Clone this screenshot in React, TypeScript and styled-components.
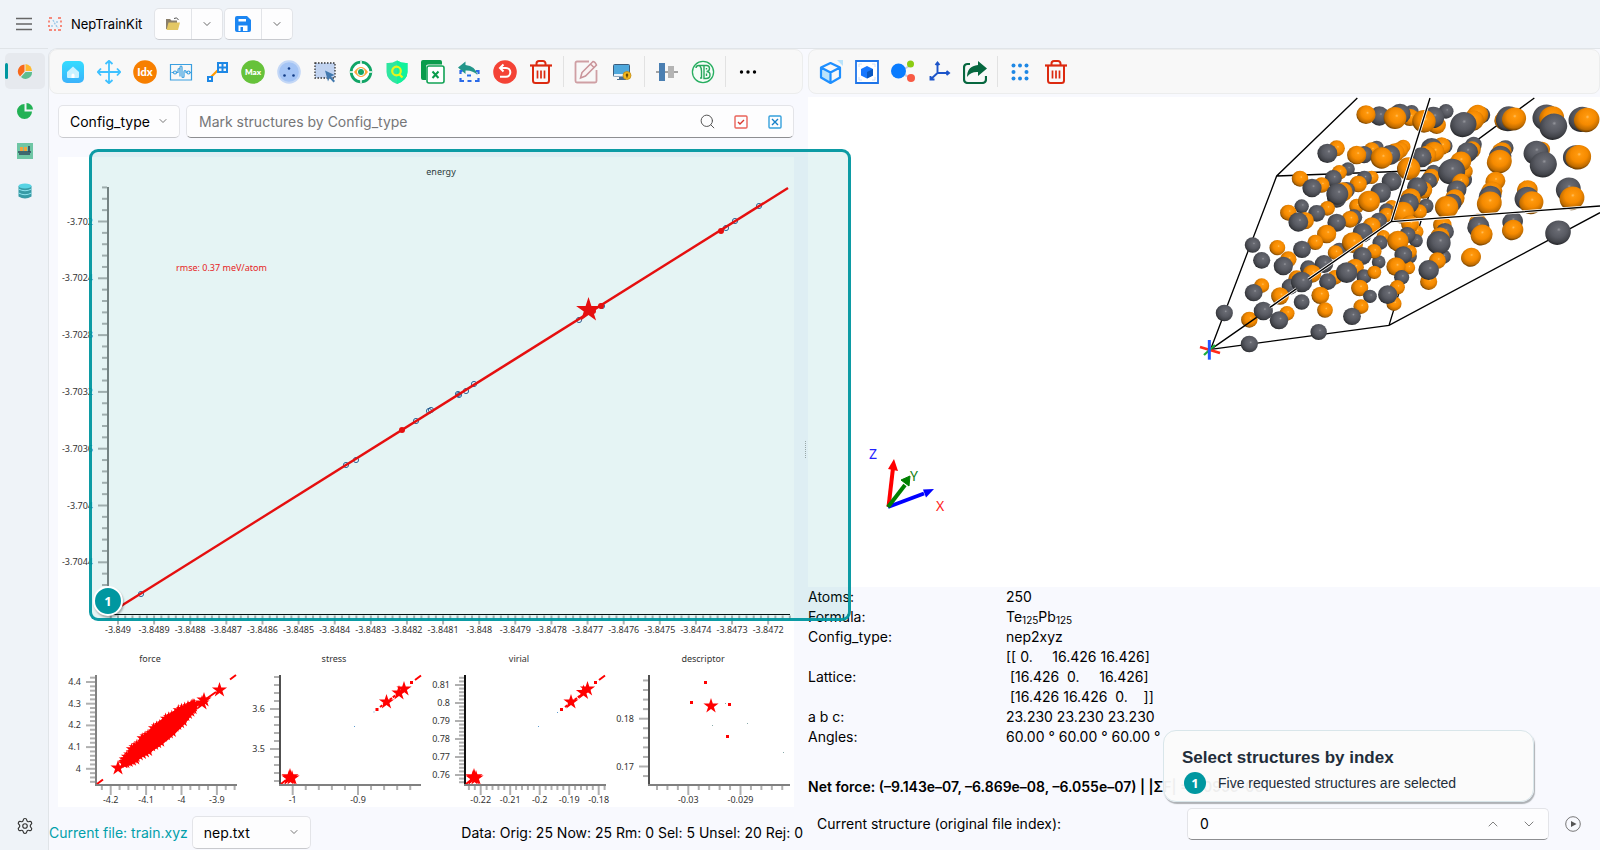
import React from 'react';
import styled, { createGlobalStyle } from 'styled-components';
import { ChevronDown, ChevronUp, Search, Settings } from 'lucide-react';

const UI_FONT = 'Inter, "Liberation Sans", sans-serif';
const TEAL = '#0097a0';

const GlobalStyle = createGlobalStyle`
  *, *::before, *::after { box-sizing: border-box; }
  body { margin: 0; background: #eff3f8; color: #000; font: 14px/20px ${UI_FONT}; }
  button, input, select { font: inherit; color: inherit; }
`;

/* ---------- window frame ---------- */

const Window = styled.div`
  min-height: 100vh;
  display: grid;
  grid-template: 48px minmax(0, 1fr) / 48px minmax(0, 1fr);
`;

const TitleBar = styled.header`
  grid-column: 1 / -1;
  display: flex;
  align-items: center;
  padding-left: 12px;
`;

const IconButton = styled.button<{ $size?: number }>`
  width: ${(p) => p.$size ?? 24}px;
  height: ${(p) => p.$size ?? 24}px;
  flex: none;
  padding: 0;
  border: 0;
  background: none;
  display: grid;
  place-items: center;
  svg { display: block; }
`;

const AppName = styled.h1`
  margin: 0 12px 0 9px;
  font-size: 13px;
  font-weight: 400;
  line-height: 20px;
`;

const Logo = styled.svg`
  margin-left: 12px;
`;

const SplitButton = styled.div`
  display: flex;
  height: 32px;
  margin-right: 1px;
  border: 1px solid #e2e4e8;
  border-bottom-color: #c8cacf;
  border-radius: 5px;
  background: #fdfdfe;
`;

const SplitPart = styled.button<{ $wide?: boolean }>`
  width: ${(p) => (p.$wide ? 36 : 31)}px;
  padding: 0;
  border: 0;
  background: none;
  display: grid;
  place-items: center;
  color: #555;
  & + & { border-left: 1px solid #e2e4e8; }
`;

const Sidebar = styled.nav`
  display: flex;
  flex-direction: column;
  gap: 4px;
  padding: 4px 3px 6px 5px;
  border-top: 1px solid #e0e4e8;
`;

const NavItem = styled.button<{ $active?: boolean }>`
  height: 36px;
  padding: 0;
  border: 0;
  border-radius: 5px;
  background: ${(p) => (p.$active ? '#e6e9ee' : 'none')};
  display: grid;
  place-items: center;
  position: relative;
  &::before {
    content: '';
    display: ${(p) => (p.$active ? 'block' : 'none')};
    position: absolute;
    left: 0;
    top: 10px;
    width: 3px;
    height: 16px;
    border-radius: 2px;
    background: ${TEAL};
  }
  &:last-child { margin-top: auto; }
`;

const Workspace = styled.main`
  position: relative;
  display: grid;
  grid-template-columns: minmax(0, 754fr) 5px minmax(0, 792fr);
  border: 1px solid #e0e4e8;
  border-width: 1px 0 0 1px;
  border-top-left-radius: 9px;
  background: #f8f9fe;
`;

const Panel = styled.section`
  display: flex;
  flex-direction: column;
  min-width: 0;
`;

const Toolbar = styled.div<{ $inset: number }>`
  display: flex;
  align-items: center;
  gap: 12px;
  height: 45px;
  padding-left: ${(p) => p.$inset}px;
  flex: none;
  border: 1px solid #eceded;
  border-radius: 8px;
  background: #f8f8f8;
`;

const Separator = styled.span`
  width: 1px;
  height: 31px;
  margin: 0 -2px;
  background: #e2e2e2;
`;

const Splitter = styled.div`
  display: grid;
  place-items: center;
  &::after {
    content: '';
    height: 17px;
    border-left: 1px dotted #aaa;
  }
`;

/* ---------- left panel ---------- */

const FilterRow = styled.div`
  display: flex;
  gap: 6px;
  padding: 11px 9px 19px;
`;

const SelectBox = styled.div<{ $width: number }>`
  position: relative;
  width: ${(p) => p.$width}px;
  height: 33px;
  flex: none;
  svg { position: absolute; right: 11px; top: 10px; pointer-events: none; }
`;

const Select = styled.select`
  appearance: none;
  width: 100%;
  height: 100%;
  padding: 0 24px 0 11px;
  border: 1px solid #e3e4e8;
  border-bottom-color: #c9cace;
  border-radius: 5px;
  background: #fdfdfe;
`;

const SearchBox = styled.div`
  flex: 1;
  min-width: 0;
  height: 33px;
  display: flex;
  align-items: center;
  gap: 10px;
  padding: 0 6px 0 12px;
  border: 1px solid #e3e4e8;
  border-bottom-color: #8d8e91;
  border-radius: 5px;
  background: #fdfdfe;
`;

const TextInput = styled.input`
  flex: 1;
  min-width: 0;
  padding: 0;
  border: 0;
  outline: 0;
  background: none;
  &::placeholder { color: #757678; opacity: 1; }
`;

const PlotArea = styled.div`
  flex: 1;
  margin: 0 9px;
  background: #fff;
  svg { display: block; width: 100%; height: 100%; }
  text { font: 9px/12px "Noto Sans", sans-serif; fill: #333; }
`;

const StatusBar = styled.footer`
  display: flex;
  align-items: center;
  gap: 4px;
  padding: 9px 0 1px;
`;

const FileName = styled.span`
  color: #009faa;
`;

const Counts = styled.span`
  margin-left: auto;
`;

/* ---------- right panel ---------- */

const Viewport = styled.div`
  flex: 1;
  margin-top: 3px;
  background: #fff;
  svg { display: block; width: 100%; height: 100%; }
  text { font: 14px "Noto Sans", sans-serif; }
`;

const InfoTable = styled.table`
  border-collapse: collapse;
  margin-bottom: 30px;
  th, td { padding: 0; font-weight: 400; text-align: left; white-space: pre; }
  th { width: 198px; }
  sub { font-size: 10px; line-height: 10px; vertical-align: -2px; }
`;

const NetForce = styled.p`
  margin: 0;
  font-weight: 600;
  white-space: nowrap;
`;

const NavigatorRow = styled.div`
  display: flex;
  align-items: center;
  gap: 12px;
  padding: 11px 15px 10px 9px;
`;

const NavigatorLabel = styled.label`
  flex: 1;
`;

const SpinBox = styled.div`
  width: 362px;
  height: 32px;
  display: flex;
  align-items: center;
  gap: 12px;
  padding: 0 7px 0 12px;
  border: 1px solid #e3e4e8;
  border-bottom-color: #8d8e91;
  border-radius: 5px;
  background: #fdfdfe;
  color: #777;
  input { color: #000; }
`;

/* ---------- tutorial overlay ---------- */

const Highlight = styled.div`
  position: absolute;
  left: 40px;
  top: 100px;
  bottom: 229px;
  width: 49.1%;
  border: 3px solid rgba(0, 151, 160, 0.95);
  border-radius: 9px;
  background: rgba(0, 151, 145, 0.1);
  pointer-events: none;
`;

const StepDot = styled.span<{ $large?: boolean }>`
  display: grid;
  place-items: center;
  flex: none;
  width: ${(p) => (p.$large ? 30 : 22)}px;
  height: ${(p) => (p.$large ? 30 : 22)}px;
  border: ${(p) => (p.$large ? '2px solid #fff' : '0')};
  border-radius: 50%;
  background: ${TEAL};
  color: #fff;
  font: bold 13px "Noto Sans", sans-serif;
  box-shadow: ${(p) => (p.$large ? '1px 2px 2px rgba(0,0,0,.3)' : 'none')};
`;

const HighlightStep = styled.div`
  position: absolute;
  left: 1px;
  bottom: 2px;
`;

const Callout = styled.aside`
  position: absolute;
  right: 66px;
  bottom: 48px;
  width: 371px;
  height: 72px;
  padding: 17px 18px 0;
  border: 1px solid #d9e6ea;
  border-radius: 13px;
  background: rgba(251, 251, 251, 0.95);
  box-shadow: 1px 2px 1px rgba(100, 105, 110, 0.5);
  color: #222d3a;
  font: 14px/20px "Liberation Sans", Arial, sans-serif;
`;

const CalloutTitle = styled.h2`
  margin: 0 0 4px;
  font-size: 17px;
  line-height: 20px;
`;

const CalloutStep = styled.div`
  display: flex;
  align-items: center;
  gap: 12px;
  padding-left: 2px;
`;

/* ---------- icons ---------- */

const icons: Record<string, React.ReactNode> = {
  Home: <><defs><linearGradient id="hm" x1="0" y1="0" x2="0" y2="1"><stop stopColor="#34dcff" /><stop offset="1" stopColor="#3bb2fb" /></linearGradient></defs><rect x="1" y="1" width="22" height="22" rx="5" fill="url(#hm)" /><path d="M6 12l6-5.500 6 5.500v5a1 1 0 0 1-1 1H7a1 1 0 0 1-1-1z" fill="#c9f2ff" /><path d="M10.500 18v-3a1.500 1.500 0 0 1 3 0v3z" fill="#fff" /></>,
  Pan: <path d="M12 1v22M1 12h22M8.500 4L12 .8 15.500 4M8.500 20l3.500 3.200 3.500-3.200M4 8.500L.8 12 4 15.500M20 8.500l3.200 3.500-3.200 3.500" fill="none" stroke="#3fc1ff" strokeWidth="1.800" />,
  'Select by index': <><circle cx="12" cy="12" r="11.800" fill="#f77f00" /><text x="12" y="15.500" textAnchor="middle" fontFamily="Lato" fontWeight="900" fontSize="11" fill="#fff">Idx</text></>,
  Range: <path d="M1.500 4.500h21v15.500h-21zM2.500 12.500h2m3 0h1.500V10q0-1.500 1-1.500t1 1.500v6.500M11 16.500V7.500q0-1.500 1-1.500t1 1.500v9q0 1 1 1t1-1v-5q0-1 1-1t1 1v1h1m3 0h1M4.500 12.500a1.500 1.500 0 1 0 3 0 1.500 1.500 0 1 0-3 0M18 12.500a1.500 1.500 0 1 0 3 0 1.500 1.500 0 1 0-3 0" fill="none" stroke="#3a9fe0" strokeWidth="1.200" />,
  Lattice: <><path d="M6 17l6.500-6.500" stroke="#f90" strokeWidth="2.200" /><path d="M3 17h4v4H3z" fill="none" stroke="#1e88e5" strokeWidth="2" /><path d="M13 3h9v9h-9zM17.500 3v9M13 7.500h9" fill="none" stroke="#1e88e5" strokeWidth="2" /></>,
  'Max error': <><circle cx="12" cy="12" r="11.800" fill="#66c23a" /><text x="12" y="15" textAnchor="middle" fontFamily="Lato" fontWeight="800" fontSize="8" fill="#fff">Max</text></>,
  Sparse: <><circle cx="12" cy="12" r="11.800" fill="#c3d7f6" /><circle cx="12" cy="12" r="9.800" fill="#a4c4f5" /><g fill="#123c86"><circle cx="12" cy="8.500" r="1.300" /><circle cx="7.500" cy="15.500" r="1.300" /><circle cx="16.500" cy="15.500" r="1.300" /></g></>,
  'Box select': <><path d="M2 3h20v15H2z" fill="#c1d3f0" stroke="#333" strokeWidth="1.300" strokeDasharray="1.500 1.500" /><path d="M12 10.500l9.500 4.500-3.500 1.500 4 4.500-1.500 1.500-4-4.500-1.500 3.500z" fill="#4279ae" /></>,
  Inspect: <><circle cx="12" cy="12" r="9.800" fill="#fff" stroke="#12a566" strokeWidth="2.800" /><path d="M12 1v6M12 17v6M1 12h5M18 12h5" stroke="#fff" strokeWidth="1.500" /><path d="M5 12q7-10 14 0-7 10-14 0" fill="#ffa63a" /><circle cx="12" cy="12" r="3.600" fill="#12a566" stroke="#fff" /></>,
  Protect: <><path d="M12 .5q5 3 10.500 2.500V12q0 8-10.500 12Q1.500 20 1.500 12V3Q7 3.500 12 .5z" fill="#2fe6a0" /><path d="M12 .5q5 3 10.500 2.500V12q0 8-10.500 12z" fill="#12f29b" /><circle cx="11.500" cy="11" r="4.300" fill="none" stroke="#e6f51c" strokeWidth="2.200" /><path d="M14.500 14.500l3 3" stroke="#e6f51c" strokeWidth="2.200" /></>,
  'Clear selection': <><path d="M2 0h17a2 2 0 0 1 2 2v2.500H7a2 2 0 0 0-2 2V20H2a2 2 0 0 1-2-2V2a2 2 0 0 1 2-2z" fill="#0a9c4c" /><rect x="6" y="6" width="17" height="17" rx="2" fill="#fff" stroke="#12a356" strokeWidth="1.600" /><path d="M11.500 11.500l6 6.500M17.500 11.500l-6 6.500" stroke="#0a9c4c" strokeWidth="2" /></>,
  Invert: <><path d="M1 7.500l7.500-6v3.500q10 1 12 10-5-5-12-4.500V14z" fill="#23968a" /><path d="M3.500 14v-3h2M19 11h2.500v3M21.500 18v3H18M7 21H3.500v-3M10.500 21h4M10 15.500h4" fill="none" stroke="#2b6be8" strokeWidth="2.200" /></>,
  Undo: <><circle cx="12" cy="12" r="11.800" fill="#f44336" /><path d="M10.500 4.500L7 8l3.500 3.500M7.500 8H13a4.300 4.300 0 0 1 0 8.700H7" fill="none" stroke="#fff" strokeWidth="2" /></>,
  Delete: <><path d="M1 5.500h22" stroke="#dc2a10" strokeWidth="2.200" /><path d="M7.500 5V3.500A2.500 2.500 0 0 1 10 1h4a2.500 2.500 0 0 1 2.500 2.500V5M4 6v14.500A2.500 2.500 0 0 0 6.500 23h11a2.500 2.500 0 0 0 2.500-2.500V6" fill="none" stroke="#dc2a10" strokeWidth="2" /><path d="M8.500 10.500v8M12 10.500v8M15.500 10.500v8" stroke="#dc2a10" strokeWidth="1.700" /></>,
  Edit: <><path d="M15 1.500H3A1.500 1.500 0 0 0 1.500 3v18A1.500 1.500 0 0 0 3 22.500h18a1.500 1.500 0 0 0 1.500-1.500V10" fill="none" stroke="#cf9fa4" strokeWidth="1.800" /><path d="M8 12.500l11-11q2 0 3.500 3.500l-11 11-5 2zM16.500 4l3.500 3.500" fill="#faf3f3" stroke="#c9949a" strokeWidth="1.500" /></>,
  Display: <><rect x="3.500" y="4.500" width="16" height="12" rx="1" fill="#4fa8dc" stroke="#3b5c7c" /><path d="M4 14h15v2.500H4z" fill="#e9f2fa" /><path d="M9 17h5v2h2v1H7v-1h2z" fill="#4a6f92" /><circle cx="17" cy="15.500" r="4" fill="#f5b81d" stroke="#b78210" strokeWidth=".7" /><path d="M17 13.500v4M15.800 15h2.400" stroke="#604000" strokeWidth="1.300" /></>,
  Align: <><path d="M1 12h22" stroke="#888" strokeWidth="1.500" /><rect x="4" y="3" width="6" height="18" fill="#4a7fb2" /><rect x="13" y="6" width="6" height="12" fill="#b4b4b4" /></>,
  'Energy baseline': <><circle cx="12" cy="12" r="10.600" fill="#f5fdf8" stroke="#27ae60" strokeWidth="1.300" /><path d="M5 8q0-2.500 3-2.500h6M8.500 5.500q2 2 2 5.500v7H9M13 5.500v13h2q4 0 4-3.500t-3.500-3.500q3 0 3-3t-3-3H11M15.500 8v1.500M15.500 13.500v2.500" fill="none" stroke="#27a65c" strokeWidth="1.400" /></>,
  More: <><circle cx="5.500" cy="12" r="1.700" /><circle cx="12" cy="12" r="1.700" /><circle cx="18.500" cy="12" r="1.700" /></>,
  Perspective: <><path d="M2 8l10 5v10L2 18z" fill="#b9e3fb" /><path d="M2 7.500L11.500 3 21 7.500v10L11.500 23 2 17.500zM2 7.500l9.500 5L21 7.500M11.500 12.500V23" fill="none" stroke="#1e8fff" strokeWidth="2.200" strokeLinejoin="round" /><path d="M18 0h6v6z" fill="#b9e3fb" /></>,
  'Fit view': <><path d="M1 1h22v22H1z" fill="#fff" stroke="#1e74e8" strokeWidth="1.800" /><path d="M12 6l6 3v6.500l-6 3-6-3V9z" fill="#1677ff" /><path d="M12 12l6-3v6.500l-6 3z" fill="#0a58c0" /><path d="M4 7V4h3M17 4h3v3M20 17v3h-3M7 20H4v-3" fill="none" stroke="#cfe0fa" /></>,
  Bonds: <><path d="M8 12l12-7M8 12l12 6" stroke="#ccd" strokeWidth="2" /><circle cx="7.500" cy="11" r="7.500" fill="#0a7cff" /><circle cx="19.500" cy="4" r="3.500" fill="#8ccc12" /><circle cx="20" cy="18" r="4" fill="#f85a44" /></>,
  Axes: <path d="M10.500 13V3M8.500 5l2-2.500 2 2.500M10.500 13H22M19.500 11l2.500 2-2.500 2M10.500 13l-7 6.500M3.500 16v3.500H7.500" fill="none" stroke="#1d55c9" strokeWidth="1.900" />,
  Export: <><path d="M7 4H4.500Q1 4 1 8v11q0 4 4 4h14q4 0 4-4v-3" fill="none" stroke="#06673f" strokeWidth="2.200" /><path d="M15 1l9 7.500-9 7.500v-4q-7-.5-11 5 0-11 11-12z" fill="#06673f" /></>,
  Supercell: <g fill="#1e88e5">{[5.5, 12, 18.5].flatMap((x) => [5.5, 12, 18.5].map((y) => (x === 12 && y === 12 ? null : <circle key={`${x}${y}`} cx={x} cy={y} r="2" />)))}</g>,
};

const Glyph = ({ name }: { name: string }) => (
  <svg width="24" height="24" viewBox="0 0 24 24">{icons[name]}</svg>
);

const ToolGroup = ({ names }: { names: string[] }) => (
  <>{names.map((n) => <IconButton key={n} aria-label={n}><Glyph name={n} /></IconButton>)}</>
);

/* ---------- charts ---------- */

const star = (cx: number, cy: number, r: number) =>
  Array.from({ length: 10 }, (_, i) => {
    const k = i % 2 ? r * 0.38 : r;
    const a = (Math.PI / 5) * i - Math.PI / 2;
    return `${(cx + k * Math.cos(a)).toFixed(1)},${(cy + k * Math.sin(a)).toFixed(1)}`;
  }).join(' ');

const Star = ({ x, y, r = 8 }: { x: number; y: number; r?: number }) => <polygon points={star(x, y, r)} fill="red" />;

interface AxisSpec {
  first: number;
  step: number;
  minor: number;
  labels: string[];
}

interface ChartProps {
  title: string;
  titleX: number;
  titleY: number;
  box: [number, number, number, number];
  x: AxisSpec;
  y: AxisSpec;
  leftColor?: string;
  bottomColor?: string;
  children: React.ReactNode;
}

const ticks = (a: AxisSpec, min: number, max: number) => {
  const out: { at: number; label?: string }[] = [];
  const d = a.step / a.minor;
  for (let i = -20; i < 200; i++) {
    const at = a.first + d * i;
    if (at < min || at > max) continue;
    out.push({ at, label: i % a.minor === 0 ? a.labels[i / a.minor] : undefined });
  }
  return out;
};

const Chart = ({ title, titleX, titleY, box, x, y, leftColor = '#808080', bottomColor = '#808080', children }: ChartProps) => {
  const [l, t, r, b] = box;
  return (
    <g>
      <text x={titleX} y={titleY} textAnchor="middle">{title}</text>
      {ticks(y, t, b).map(({ at, label }) => (
        <g key={at}>
          <path d={`M${l - 1} ${at}h${label ? -9 : -5}`} stroke="#b0b0b0" strokeWidth="2" />
          {label && <text x={l - 15} y={at + 3} textAnchor="end">{label}</text>}
        </g>
      ))}
      {ticks(x, l, r).map(({ at, label }) => (
        <g key={at}>
          <path d={`M${at} ${b + 1}v${label ? 9 : 4}`} stroke="#b0b0b0" strokeWidth="2" />
          {label && <text x={at} y={b + 18} textAnchor="middle">{label}</text>}
        </g>
      ))}
      <path d={`M${l} ${t}V${b}`} stroke={leftColor} strokeWidth="2" />
      {children}
      <path d={`M${l - 1} ${b}H${r}`} stroke={bottomColor} strokeWidth={bottomColor === '#000' ? 1 : 2} />
    </g>
  );
};

const energyPoints = [[141, 594], [346, 465], [356, 460], [416, 421], [429, 411], [431, 410], [458, 394], [459, 395], [466, 391], [474, 384], [579, 320], [602, 306], [726, 228], [735, 221], [759, 206]];
const energySelected = [[402, 430], [593, 311], [601, 306], [721, 231]];

const forceStars = Array.from({ length: 140 }, (_, i) => {
  const u = -1 + (2 * i) / 139;
  const w = ((i * 37) % 23) / 11.5 - 1;
  const along = u * 46;
  const across = w * 8 * Math.sqrt(1 - u * u);
  return [159 + along * 0.77 + across * 0.64, 734 - along * 0.64 + across * 0.77];
});

const axis = (first: number, step: number, minor: number, labels: string[]): AxisSpec => ({ first, step, minor, labels });

const energyX = ['-3.849', ...Array.from({ length: 18 }, (_, i) => String(-(38489 - i) / 10000))];

const Dots = ({ at, color = 'red', size = 3 }: { at: number[][]; color?: string; size?: number }) => (
  <>{at.map(([x, y]) => <rect key={`${x},${y}`} x={x - size / 2} y={y - size / 2} width={size} height={size} fill={color} />)}</>
);

const Plots = () => (
  <svg viewBox="58 157 736 650" role="img" aria-label="Parity plots">
    <Chart title="energy" titleX={441} titleY={175} box={[108, 187, 790, 614.5]} bottomColor="#000"
      x={axis(118, 36.12, 5, energyX)}
      y={axis(221.5, 56.8, 5, ['-3.702', '-3.7024', '-3.7028', '-3.7032', '-3.7036', '-3.704', '-3.7044'])}>
      {energyPoints.map(([x, y]) => <circle key={`${x},${y}`} cx={x} cy={y} r="2.600" fill="none" stroke="#1f4e8c" strokeWidth=".9" />)}
      <path d="M109 613.500L788 188" stroke="red" strokeWidth="2.400" />
      {energySelected.map(([x, y]) => <circle key={`${x},${y}`} cx={x} cy={y} r="3" fill="red" />)}
      <Star x={588.5} y={310} r={13} />
      <text x="176" y="271" style={{ fill: '#ff1010' }}>rmse: 0.37 meV/atom</text>
    </Chart>
    <Chart title="force" titleX={150} titleY={662} box={[96, 675, 237, 785]}
      x={axis(110.7, 35.4, 4, ['-4.2', '-4.1', '-4', '-3.9'])}
      y={axis(682, 21.7, 5, ['4.4', '4.3', '4.2', '4.1', '4'])}>
      <path d="M97 784l6-4.500M230 679.500l6-4.500M196 706l20-14" stroke="red" strokeWidth="2" />
      <ellipse cx="163" cy="731" rx="40" ry="10" fill="red" transform="rotate(-40 163 731)" />
      {forceStars.map(([x, y], i) => <Star key={i} x={x} y={y} r={6} />)}
      <Star x={118} y={768} /><Star x={202} y={703} /><Star x={204} y={700} /><Star x={219.5} y={690} />
    </Chart>
    <Chart title="stress" titleX={334} titleY={662} box={[280, 675, 421, 785]} leftColor="#505050"
      x={axis(292.7, 65.3, 5, ['-1', '-0.9'])}
      y={axis(709, 40, 5, ['3.6', '3.5'])}>
      <path d="M281 784l5-4M415 680l6-4.500" stroke="red" strokeWidth="2" />
      <path d="M380 707l24-18" stroke="red" strokeWidth="2" strokeDasharray="3 1" />
      <Star x={386.5} y={702} /><Star x={399} y={693} /><Star x={404} y={689} />
      <Star x={289} y={778} /><Star x={290} y={777} r={9} /><Star x={292} y={778} />
      <Dots at={[[377, 709.5], [411.5, 682.5]]} /><Dots at={[[354.5, 726.5], [374, 712]]} color="#5b9bd0" size={1} />
    </Chart>
    <Chart title="virial" titleX={519} titleY={662} box={[465, 675, 606, 785]} leftColor="#111"
      x={axis(480.7, 29.5, 5, ['-0.22', '-0.21', '-0.2', '-0.19', '-0.18'])}
      y={axis(685, 18, 5, ['0.81', '0.8', '0.79', '0.78', '0.77', '0.76'])}>
      <path d="M466 784l5-4M599 680l6-4.500" stroke="red" strokeWidth="2" />
      <path d="M565 707l24-18" stroke="red" strokeWidth="2" strokeDasharray="3 1" />
      <Star x={571} y={702} /><Star x={583.5} y={692.5} /><Star x={587.5} y={689} />
      <Star x={473} y={778} /><Star x={474} y={777} r={9} /><Star x={476} y={778} />
      <Dots at={[[561.5, 709.5], [595.5, 682.5]]} /><Dots at={[[538.5, 726.5], [557.5, 712.5]]} color="#5b9bd0" size={1} />
    </Chart>
    <Chart title="descriptor" titleX={703} titleY={662} box={[649, 675, 790, 785]} leftColor="#505050"
      x={axis(688.3, 52.2, 5, ['-0.03', '-0.029'])}
      y={axis(718.7, 47.8, 5, ['0.18', '0.17'])}>
      <Star x={711} y={706} />
      <Dots at={[[705.5, 682.5], [691.5, 702.5], [729.5, 704.5], [727.5, 736.5]]} />
      <Dots at={[[725.5, 703.5], [712.5, 725.5], [747.5, 723.5], [783.5, 752.5]]} color="#8aa" size={1} />
    </Chart>
  </svg>
);

/* ---------- structure view: atoms listed far to near as [x, y, radius, element] ---------- */

type Atom = [number, number, number, 'p' | 't'];

const atoms: Atom[] = [
  [474, 237, 20, 'p'], [335, 349, 21, 'p'], [545, 262, 20, 't'], [560, 172, 20, 'p'], [640, 170, 21, 't'], [665, 66, 21, 'p'], [660, 82, 26, 't'], [768, 64, 22, 'p'], [765, 168, 22, 'p'], [730, 245, 21, 'p'], [740, 105, 27, 't'],
  [708, 348, 22, 'p'], [605, 350, 20, 't'], [590, 362, 22, 'p'], [688, 365, 22, 't'], [680, 425, 20, 't'], [678, 452, 20, 'p'], [580, 440, 20, 't'], [660, 500, 20, 'p'], [655, 533, 20, 't'], [566, 516, 20, 'p'], [448, 480, 22, 'p'], [355, 535, 24, 'p'], [435, 562, 22, 't'], [320, 565, 24, 't'], [300, 590, 24, 'p'], [660, 485, 20, 't'], [822, 270, 23, 'p'], [825, 245, 22, 't'], [760, 500, 22, 'p'],
  [448, 247, 22, 't'], [430, 265, 25, 'p'], [330, 266, 24, 't'], [395, 285, 23, 't'], [366, 294, 28, 'p'], [440, 175, 24, 't'], [412, 190, 29, 'p'],
  [523, 264, 22, 'p'], [505, 282, 25, 't'], [470, 300, 24, 'p'], [458, 306, 29, 't'], [440, 325, 28, 'p'], [442, 312, 32, 'p'],
  [545, 180, 23, 't'], [522, 194, 26, 'p'], [500, 195, 28, 't'], [630, 180, 24, 't'], [615, 188, 28, 't'], [600, 195, 30, 'p'], [575, 204, 32, 't'],
  [568, 78, 29, 'p'], [528, 74, 28, 't'], [630, 72, 31, 'p'], [615, 84, 33, 't'],
  [730, 82, 32, 'p'], [702, 94, 34, 't'], [755, 168, 26, 't'], [725, 175, 31, 'p'], [732, 185, 30, 't'], [710, 195, 28, 't'], [694, 202, 30, 'p'],
  [875, 76, 24, 'p'], [862, 76, 31, 't'], [850, 92, 30, 't'], [820, 104, 37, 'p'],
  [605, 274, 29, 'p'], [656, 236, 34, 't'],
  [412, 355, 22, 't'], [380, 370, 25, 'p'], [295, 368, 24, 't'], [345, 392, 26, 't'], [325, 396, 29, 'p'],
  [500, 348, 22, 't'], [492, 382, 24, 'p'], [480, 388, 25, 't'], [440, 398, 27, 'p'], [410, 432, 28, 't'], [376, 457, 23, 't'], [336, 478, 26, 'p'],
  [572, 308, 30, 'p'], [537, 334, 32, 't'], [590, 375, 22, 't'], [566, 392, 24, 'p'], [545, 408, 26, 't'], [518, 428, 29, 'p'], [488, 458, 31, 't'],
  [720, 270, 24, 'p'], [724, 260, 24, 't'], [716, 272, 24, 'p'], [700, 300, 26, 't'], [682, 292, 30, 'p'], [662, 325, 30, 't'], [656, 340, 30, 'p'], [638, 368, 33, 't'],
  [850, 165, 24, 'p'], [845, 180, 26, 't'], [832, 187, 30, 'p'], [812, 215, 30, 't'], [785, 245, 38, 'p'],
  [812, 275, 24, 't'], [800, 300, 28, 'p'], [794, 326, 28, 't'], [785, 340, 28, 'p'], [770, 352, 34, 't'],
  [955, 82, 33, 'p'], [945, 90, 30, 't'], [955, 88, 35, 'p'], [972, 87, 34, 't'], [1068, 82, 38, 'p'], [1085, 84, 35, 't'], [1090, 110, 39, 'p'], [1175, 88, 37, 'p'], [1190, 90, 36, 't'],
  [945, 175, 24, 'p'], [935, 185, 28, 't'], [930, 200, 32, 'p'], [928, 215, 35, 't'], [1055, 180, 24, 't'], [1038, 188, 35, 'p'], [1060, 224, 38, 'p'], [1155, 200, 34, 'p'], [1165, 202, 36, 't'],
  [916, 274, 28, 't'], [905, 305, 30, 't'], [900, 320, 32, 'p'], [898, 340, 35, 't'], [1012, 300, 29, 't'], [1010, 325, 34, 'p'], [1024, 338, 34, 't'], [1135, 298, 35, 'p'], [1146, 325, 35, 't'],
  [863, 395, 24, 't'], [865, 410, 31, 'p'], [875, 435, 31, 't'], [968, 395, 29, 'p'], [968, 420, 30, 't'], [1104, 428, 36, 'p'], [843, 502, 28, 't'],
  [660, 402, 26, 't'], [652, 435, 24, 'p'], [624, 453, 31, 't'], [570, 458, 22, 'p'], [552, 484, 22, 't'], [517, 498, 27, 'p'], [495, 532, 26, 't'], [522, 560, 22, 'p'], [470, 548, 31, 'p'], [553, 547, 20, 't'],
  [436, 488, 22, 't'], [402, 522, 27, 'p'], [366, 551, 27, 't'], [335, 576, 31, 'p'], [413, 575, 25, 'p'],
  [640, 495, 26, 'p'], [618, 530, 28, 't'], [635, 562, 22, 'p'], [622, 592, 22, 't'], [612, 641, 22, 't'], [593, 614, 28, 'p'],
  [757, 405, 27, 't'], [765, 425, 26, 'p'], [750, 440, 28, 't'], [746, 458, 35, 'p'], [742, 512, 25, 't'], [716, 575, 25, 't'], [716, 540, 30, 'p'],
  [262, 473, 23, 't'], [295, 508, 24, 't'], [280, 528, 28, 'p'], [188, 465, 23, 'p'], [215, 511, 25, 'p'], [215, 587, 22, 't'], [191, 608, 26, 'p'],
  [270, 618, 26, 't'], [335, 636, 23, 'p'], [391, 616, 26, 't'], [405, 660, 23, 't'], [509, 594, 25, 't'], [540, 619, 20, 'p'], [513, 650, 22, 't'], [486, 679, 26, 'p'],
  [103, 669, 25, 'p'], [178, 689, 24, 't'], [291, 670, 22, 't'], [267, 691, 27, 'p'], [220, 663, 28, 'p'], [178, 762, 25, 'p'], [386, 726, 24, 'p'],
];

const StructureScene = () => (
  <svg viewBox="808 97 792 489" preserveAspectRatio="xMaxYMin meet" role="img" aria-label="Crystal structure">
    <defs>
      <radialGradient id="p" cx=".58" cy=".4" r=".65"><stop stopColor="#96979d" /><stop offset=".12" stopColor="#686a72" /><stop offset=".5" stopColor="#585a62" /><stop offset=".8" stopColor="#414349" /><stop offset="1" stopColor="#1e1f22" /></radialGradient>
      <radialGradient id="t" cx=".58" cy=".4" r=".65"><stop stopColor="#ffc060" /><stop offset=".12" stopColor="#ff980c" /><stop offset=".5" stopColor="#f58a00" /><stop offset=".8" stopColor="#c06c00" /><stop offset="1" stopColor="#553000" /></radialGradient>
    </defs>
    <g transform="translate(1190 90) scale(.33333)" fill="none" stroke="#000" strokeWidth="4">
      <path d="M62 778L260 258 502 24M260 258L740 240M1033 24L740 240 597 706M62 778L597 706 1230 368" />
      <g stroke="none">
        {atoms.map(([x, y, r, el], i) => (
          <ellipse key={i} cx={x} cy={y} rx={r * (x > 780 ? 1.08 : 1.03)} ry={r} fill={`url(#${el})`} transform={x > 780 ? `rotate(-25 ${x} ${y})` : undefined} />
        ))}
      </g>
      <path d="M240 652L320 596M355 568L604 395 720 24M604 395L1230 348" stroke="#fff" strokeWidth="9" />
      <path d="M62 778L200 682M240 652L320 596M355 568L604 395 720 24M604 395L1230 348" />
      <path d="M30 771l60 18" stroke="#ff2a1a" strokeWidth="8" /><path d="M42 795l33-30" stroke="#1cae3c" strokeWidth="7" /><path d="M58 750v59" stroke="#2357ff" strokeWidth="9" />
    </g>
    <path d="M888.500 507L893 468" stroke="red" strokeWidth="4" /><path d="M894 459l-6 10 10 2z" fill="red" />
    <path d="M888 507l36-13.500" stroke="#00f" strokeWidth="4" /><path d="M934 489l-11 .500 3 8z" fill="#00f" />
    <path d="M888 507l17-22" stroke="green" strokeWidth="4" /><path d="M910 476l-9 4 8 6z" fill="green" stroke="green" />
    <text x="869" y="459" fill="#2222ff">Z</text>
    <text x="910" y="481" fill="#118011">Y</text>
    <text x="936" y="511" fill="#ff2222">X</text>
  </svg>
);

const lattice = '[[ 0.     16.426 16.426]\n [16.426  0.     16.426]\n [16.426 16.426  0.    ]]';

export default function App() {
  return (
    <Window>
      <GlobalStyle />
      <TitleBar>
        <IconButton aria-label="Menu"><svg width="18" height="14"><path d="M1 1.500h16M1 7h16M1 12.500h16" stroke="#666" strokeWidth="1.600" /></svg></IconButton>
        <Logo width="14" height="14" viewBox="0 0 14 14"><path d="M1 1h3M10 1h3M1 13h3M10 13h3M0 4.500h2M12 4.500h2M0 9h2M12 9h2M6 13h2" stroke="#f58a7c" strokeWidth="2" /><path d="M5 3l2 4 3 4M9 4v2M4 8v2" fill="none" stroke="#9cc9e8" strokeWidth="1.400" strokeDasharray="2 1" /></Logo>
        <AppName>NepTrainKit</AppName>
        <SplitButton>
          <SplitPart $wide aria-label="Open"><svg width="16" height="16" viewBox="0 0 16 16"><path d="M1 3h4l1.500 1.500H12V13H1z" fill="#8a7f6a" /><path d="M3.500 6.500H15L13 14H1.500z" fill="#e3c763" /><path d="M9 2.500q3-2 4.500 1.500" fill="none" stroke="#555" /></svg></SplitPart>
          <SplitPart aria-label="Open options"><ChevronDown size={12} strokeWidth={1.8} /></SplitPart>
        </SplitButton>
        <SplitButton>
          <SplitPart $wide aria-label="Save"><svg width="16" height="16" viewBox="0 0 16 16"><path d="M2 0h10l4 4v10a2 2 0 0 1-2 2H2a2 2 0 0 1-2-2V2a2 2 0 0 1 2-2z" fill="#1c86f2" /><path d="M3.500 3h7.500v2.500H3.500zM3.500 9.500h9V15h-9z" fill="#fff" /><path d="M5.500 11h2.500v4H5.500z" fill="#1c86f2" /></svg></SplitPart>
          <SplitPart aria-label="Save options"><ChevronDown size={12} strokeWidth={1.8} /></SplitPart>
        </SplitButton>
      </TitleBar>

      <Sidebar aria-label="Pages">
        <NavItem $active aria-label="Show NEP"><svg width="16" height="16" viewBox="0 0 16 16"><path d="M7.500 1.500v7L3 13.500A7 7 0 0 1 7.500 1.500z" fill="#f8681a" /><path d="M8.500 1a7 7 0 0 1 6.500 7H8.500z" fill="#ffb92e" /><path d="M8.500 9H15a6.500 6.500 0 0 1-11 5z" fill="#5dbd90" /></svg></NavItem>
        <NavItem aria-label="Dataset"><svg width="16" height="16" viewBox="0 0 16 16"><path d="M7.500 1v7.500H15A7.500 7.500 0 1 1 7.500 1z" fill="#22b155" /><path d="M9.500 0A6.500 6.500 0 0 1 16 6.500H9.500z" fill="#22b155" /></svg></NavItem>
        <NavItem aria-label="Make data"><svg width="16" height="16" viewBox="0 0 16 16"><path d="M0 0h16v16H0z" fill="#6fc6a5" /><path d="M3 4h3v4H3zM7 4h3v4H7z" fill="#f2a33c" /><path d="M1 9h13M12 3v6M2 11h11" stroke="#2f4a5c" strokeWidth="1.600" /></svg></NavItem>
        <NavItem aria-label="Data management"><svg width="16" height="16" viewBox="0 0 16 16"><path d="M1.500 3h13v10.500q-6.500 4-13 0z" fill="#379ba6" /><path d="M1.500 6q6.500 3.500 13 0M1.500 10q6.500 3.500 13 0" fill="none" stroke="#8fe3ee" /><ellipse cx="8" cy="3" rx="6.500" ry="2.600" fill="#58d3e4" /></svg></NavItem>
        <NavItem aria-label="Settings"><Settings size={18} strokeWidth={1.5} color="#333" /></NavItem>
      </Sidebar>

      <Workspace>
        <Panel>
          <Toolbar $inset={11}>
            <ToolGroup names={['Home', 'Pan', 'Select by index', 'Range', 'Lattice', 'Max error', 'Sparse', 'Box select', 'Inspect', 'Protect', 'Clear selection', 'Invert', 'Undo', 'Delete']} />
            <Separator />
            <ToolGroup names={['Edit', 'Display']} />
            <Separator />
            <ToolGroup names={['Align', 'Energy baseline']} />
            <Separator />
            <ToolGroup names={['More']} />
          </Toolbar>
          <FilterRow>
            <SelectBox $width={122}>
              <Select aria-label="Search field"><option>Config_type</option></Select>
              <ChevronDown size={12} strokeWidth={1.8} color="#666" />
            </SelectBox>
            <SearchBox>
              <TextInput aria-label="Mark structures" placeholder="Mark structures by Config_type" />
              <IconButton aria-label="Search"><Search size={17} strokeWidth={1.4} color="#555" /></IconButton>
              <IconButton aria-label="Mark"><svg width="14" height="14"><rect x="1" y="1" width="12" height="12" rx="1" fill="none" stroke="#e9635a" strokeWidth="1.400" /><path d="M4 7l2 2 4-4" fill="none" stroke="#d8382e" strokeWidth="1.400" /></svg></IconButton>
              <IconButton aria-label="Unmark"><svg width="14" height="14"><rect x="1" y="1" width="12" height="12" rx="1" fill="none" stroke="#35a0dc" strokeWidth="1.400" /><path d="M4 4l6 6M10 4l-6 6" stroke="#1680c8" strokeWidth="1.400" /></svg></IconButton>
            </SearchBox>
          </FilterRow>
          <PlotArea><Plots /></PlotArea>
          <StatusBar>
            <FileName>Current file: train.xyz</FileName>
            <SelectBox $width={119}>
              <Select aria-label="Model file"><option>nep.txt</option></Select>
              <ChevronDown size={12} strokeWidth={1.8} color="#666" />
            </SelectBox>
            <Counts>Data: Orig: 25 Now: 25 Rm: 0 Sel: 5 Unsel: 20 Rej: 0</Counts>
          </StatusBar>
        </Panel>

        <Splitter />

        <Panel>
          <Toolbar $inset={10}>
            <ToolGroup names={['Perspective', 'Fit view', 'Bonds', 'Axes', 'Export']} />
            <Separator />
            <ToolGroup names={['Supercell', 'Delete']} />
          </Toolbar>
          <Viewport><StructureScene /></Viewport>
          <InfoTable>
            <tbody>
              <tr><th scope="row">Atoms:</th><td>250</td></tr>
              <tr><th scope="row">Formula:</th><td>Te<sub>125</sub>Pb<sub>125</sub></td></tr>
              <tr><th scope="row">Config_type:</th><td>nep2xyz</td></tr>
              <tr><th scope="row">Lattice:</th><td>{lattice}</td></tr>
              <tr><th scope="row">a b c:</th><td>23.230 23.230 23.230</td></tr>
              <tr><th scope="row">Angles:</th><td>60.00 ° 60.00 ° 60.00 °</td></tr>
            </tbody>
          </InfoTable>
          <NetForce>Net force: (–9.143e–07, –6.869e–08, –6.055e–07) | |ΣF| = 1.099e–06</NetForce>
          <NavigatorRow>
            <NavigatorLabel htmlFor="structure-index">Current structure (original file index):</NavigatorLabel>
            <SpinBox>
              <TextInput id="structure-index" role="spinbutton" aria-valuenow={0} defaultValue="0" />
              <IconButton aria-label="Next structure"><ChevronUp size={16} strokeWidth={1.4} /></IconButton>
              <IconButton aria-label="Previous structure"><ChevronDown size={16} strokeWidth={1.4} /></IconButton>
            </SpinBox>
            <IconButton aria-label="Play"><svg width="16" height="16" viewBox="0 0 16 16"><circle cx="8" cy="8" r="7.300" fill="none" stroke="#777" /><path d="M6 5l5.500 3L6 11z" fill="#555" /></svg></IconButton>
          </NavigatorRow>
        </Panel>

        <Highlight><HighlightStep><StepDot $large>1</StepDot></HighlightStep></Highlight>
        <Callout>
          <CalloutTitle>Select structures by index</CalloutTitle>
          <CalloutStep><StepDot>1</StepDot>Five requested structures are selected</CalloutStep>
        </Callout>
      </Workspace>
    </Window>
  );
}
